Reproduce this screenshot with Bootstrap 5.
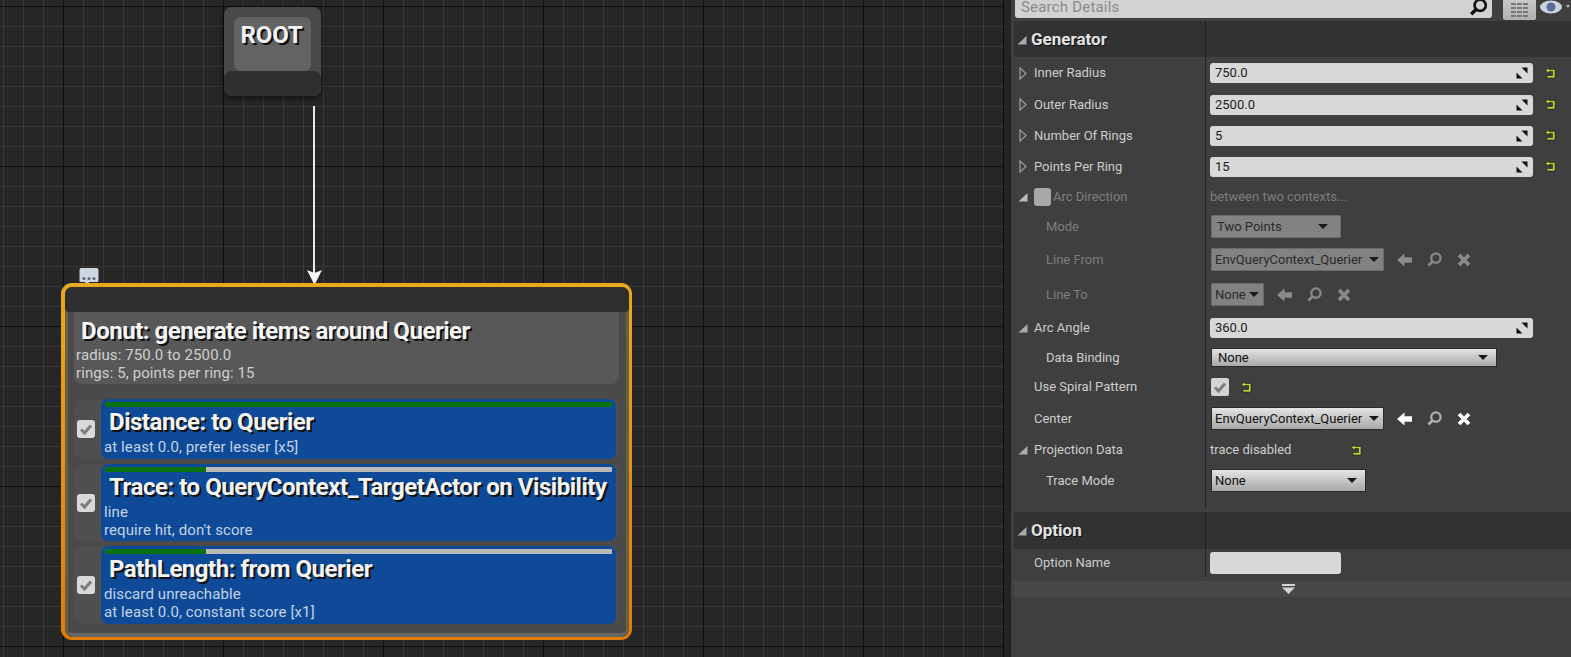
<!DOCTYPE html>
<html lang="en">
<head>
<meta charset="utf-8">
<title>Environment Query</title>
<link href="https://cdn.jsdelivr.net/npm/bootstrap@5.3.0/dist/css/bootstrap.min.css" rel="stylesheet">
<style>
html,body{width:1571px;height:657px;overflow:hidden;background:#3f3f3f;font-family:Roboto,"Liberation Sans",sans-serif;}
.stage{width:1571px;height:657px;}
.graph{width:1004px;height:657px;flex:none;background-color:#262626;
 background-size:160px 160px,160px 160px,20px 20px,20px 20px;
 background-image:linear-gradient(#0e0e0e 1px,transparent 1px),linear-gradient(90deg,#0e0e0e 1px,transparent 1px),linear-gradient(#373737 1px,transparent 1px),linear-gradient(90deg,#373737 1px,transparent 1px);
 background-position:0 6px,63px 0,0 6px,3px 0;border-right:1px solid #0c0c0c;}
.splitter{width:7px;flex:none;background:#242424;}
.root-node{left:224px;top:7px;width:97px;height:89px;background:#494949;border-radius:8px;box-shadow:0 2px 6px rgba(0,0,0,.6);overflow:hidden;}
.root-inner{margin:10px 10px 0;height:54px;background:#636363;border-radius:7px;text-align:center;padding-right:2px;}
.root-foot{height:25px;background:#2f2f2f;border-radius:8px 8px 0 0;}
.root-title{font-size:24px;font-weight:700;line-height:36px;color:#f2f2f2;text-shadow:2px 2px 0 #111;letter-spacing:-.2px;}
.wire{left:312.500px;top:106px;width:2px;height:170px;background:#e8e8e8;}
.wire-head{left:306.500px;top:270px;}
.bubble{left:79px;top:268px;}
.big-node{left:61px;top:283px;width:571px;height:357px;padding:4px 3.500px 3.500px;border-radius:11px;background:linear-gradient(#eaa91c,#e07c04);}
.big-inner{height:100%;background:#4a4a4a;border-radius:8px;box-shadow:inset 3px 0 0 #6a6048,inset -3px 0 0 #6a6048,inset 0 -4px 0 #666;}
.big-bar{height:25px;background:#2f2f2f;border-radius:7px 7px 4px 4px;}
.big-body{padding:0 10px 0 9.500px;}
.gen-block{height:72px;background:#585858;border-radius:0 0 8px 8px;padding:5px 2px 0;}
.node-title{font-size:24px;font-weight:700;line-height:28px;margin-bottom:1px;color:#f5f5f5;padding-left:5px;text-shadow:2px 2px 0 #111;letter-spacing:-.47px;white-space:nowrap;}
.node-sub{font-size:15px;line-height:18px;color:#d0d0d0;letter-spacing:.1px;}
.test-row{margin-bottom:5px;background:#4f4f4f;border-radius:8px;}
.test-first{margin-top:15px;}
.test-left{width:27px;flex:none;padding-left:3px;}
.test-blue{width:515px;flex:none;background:#0e4a97;border-radius:7px;padding:3px 4px 0 3px;}
.test-blue .node-sub{color:#c4d4e8;}
.test-blue .node-title{line-height:30px;}
.h-a{height:60px}.h-b{height:77px}.h-c{height:78px}
.score-bar{height:5px;margin-left:1px;background:#b9b9b9;border-radius:1px;overflow:hidden;}
.score-fill{height:100%;background:#0b720f;}
.tick{width:18px;height:18px;background:#d9d9d9;border-radius:3px;}
.details{width:560px;flex:none;background:#3f3f3f;}
.search-row{height:21px;padding-left:4px;}
.search-box{width:477px;height:18px;background:#d2d2d2;border-radius:0 0 3px 3px;color:#8a8a8a;font-size:15px;line-height:12px;padding:0 0 4px 6px;letter-spacing:.2px;}
.grid-btn{width:33px;height:20px;margin-left:11px;background:linear-gradient(#c8c8c8,#b0b0b0);border-radius:0 0 2px 2px;}
.section{height:36px;margin-left:3px;background:#323232;}
.section-tall{height:37px;}
.section-name{width:192px;height:100%;border-right:1px solid #1f1f1f;color:#e4e4e4;font-size:17px;font-weight:700;text-shadow:1px 1px 0 #111;padding:2px 0 0 3px;}
.section-tall .section-name{padding-top:0;}
.prop{font-size:13px;color:#cdcdcd;}
.prop-name{width:195px;height:100%;flex:none;border-right:1px solid #252525;padding-left:5px;}
.prop-value{padding-left:4px;}
.dis{color:#7e7e7e;}
.slot{width:14px;flex:none;}
.indent{padding-left:35px;}
.flush{padding-left:23px;}
.num-field{width:323px;height:20px;background:#d8d8d8;border-radius:3px;color:#1c1c1c;padding:0 5px;}
.pick{height:23px;margin-left:1px;padding:0 4px 0 3px;color:#111;border:1px solid #2a2a2a;border-radius:1px;background:linear-gradient(#e4e4e4,#a8a8a8);}
.pick-off{background:#828282;color:#2a2a2a;border-color:#6a6a6a;}
.w-two{width:130px;padding-left:5px}.w-ctx{width:173px}.w-none{width:53px}.w-bind{width:286px;height:19px;padding-left:6px}.w-trace{width:155px}
.caret{width:0;height:0;border-left:5px solid transparent;border-right:5px solid transparent;border-top:5px solid #1a1a1a;flex:none;}
.tool-group{gap:15px;margin-left:13px;}
.tool-off{color:#8a8a8a;}
.mini-tick{width:18px;height:18px;background:#d4d4d4;border-radius:2px;margin-left:1px;}
.off-tick{width:17px;height:18px;background:#a8a8a8;border-radius:3px;margin-right:2px;}
.reset-gap{margin-left:12px;}
.trace-txt{width:141px;}
.r32{height:32px}.r31{height:31px}.r30{height:30px}.r35{height:35px}.r29{height:29px}.r33{height:33px}
.tail-space{height:16px;}
.tail-space .prop-name{height:13px;}
.option-field{width:131px;height:22px;background:#d8d8d8;border-radius:3px;}
.more-bar{height:16px;margin:4px 0 0 3px;padding-right:8px;background:#484848;}
.opt-row{height:28px;}
</style>
</head>
<body>
<svg width="0" height="0" class="position-absolute">
<defs>
<symbol id="open" viewBox="0 0 10 10"><path d="M9.500 1V9.500H.5Z" fill="currentColor"/></symbol>
<symbol id="closed" viewBox="0 0 8 13"><path d="M1 1 7 6.500 1 12Z" fill="none" stroke="currentColor" stroke-width="1.300"/></symbol>
<symbol id="reset" viewBox="0 0 11 11"><path d="M0 2.500 4 0V1.500H10V10H2V7.500H7.500V3.500H4V5Z" fill="#c4cf3c" stroke="#161616" stroke-width=".6"/></symbol>
<symbol id="spin" viewBox="0 0 12 12"><path d="M11.500.5V6.500L5.500.5ZM.5 11.500V5.500L6.500 11.500Z" fill="#111"/></symbol>
<symbol id="check" viewBox="0 0 18 18"><path d="M4 9.500 7.500 13 14 5.500" fill="none" stroke="#7d7d7d" stroke-width="3"/></symbol>
<symbol id="back" viewBox="0 0 16 14"><path d="M8 0 0 7 8 14V10H16V4H8Z" fill="currentColor"/></symbol>
<symbol id="lens" viewBox="0 0 16 16"><circle cx="9.500" cy="6.500" r="5" fill="none" stroke="currentColor" stroke-width="2.400"/><path d="M6 10 1.500 14.500" stroke="currentColor" stroke-width="3"/></symbol>
<symbol id="cross" viewBox="0 0 14 14"><path d="M2 2 12 12M12 2 2 12" stroke="currentColor" stroke-width="3.800"/></symbol>
</defs>
</svg>
<div class="stage d-flex">
 <div class="graph position-relative flex-shrink-0">
  <div class="root-node position-absolute">
   <div class="root-inner"><div class="root-title">ROOT</div></div>
   <div class="root-foot"></div>
  </div>
  <div class="wire position-absolute"></div>
  <svg class="wire-head position-absolute" width="15" height="15" viewBox="0 0 15 15"><path d="M0 0 7.500 3 15 0 7.500 15Z" fill="#f5f5f5"/></svg>
  <svg class="bubble position-absolute" width="20" height="17" viewBox="0 0 20 17"><path d="M2 0H18Q19.500 0 19.500 2V13Q19.500 14 18 14H10L8 17 6 14H2Q.5 14 .5 13V2Q.5 0 2 0Z" fill="#cdd6e0"/><circle cx="5" cy="10.500" r="1.500" fill="#55657a"/><circle cx="10" cy="10.500" r="1.500" fill="#55657a"/><circle cx="15" cy="10.500" r="1.500" fill="#55657a"/></svg>
  <div class="big-node position-absolute">
   <div class="big-inner">
    <div class="big-bar"></div>
    <div class="big-body">
     <div class="gen-block">
      <div class="node-title">Donut: generate items around Querier</div>
      <div class="node-sub">radius: 750.0 to 2500.0</div>
      <div class="node-sub">rings: 5, points per ring: 15</div>
     </div>
     <div class="test-row test-first d-flex h-a">
      <div class="test-left d-flex align-items-center"><div class="tick"><svg class="d-block" width="18" height="18"><use href="#check"/></svg></div></div>
      <div class="test-blue">
       <div class="score-bar"><div class="score-fill" style="width:100%"></div></div>
       <div class="node-title">Distance: to Querier</div>
       <div class="node-sub">at least 0.0, prefer lesser [x5]</div>
      </div>
     </div>
     <div class="test-row d-flex h-b">
      <div class="test-left d-flex align-items-center"><div class="tick"><svg class="d-block" width="18" height="18"><use href="#check"/></svg></div></div>
      <div class="test-blue">
       <div class="score-bar"><div class="score-fill" style="width:20%"></div></div>
       <div class="node-title">Trace: to QueryContext_TargetActor on Visibility</div>
       <div class="node-sub">line</div>
       <div class="node-sub">require hit, don't score</div>
      </div>
     </div>
     <div class="test-row d-flex h-c">
      <div class="test-left d-flex align-items-center"><div class="tick"><svg class="d-block" width="18" height="18"><use href="#check"/></svg></div></div>
      <div class="test-blue">
       <div class="score-bar"><div class="score-fill" style="width:20%"></div></div>
       <div class="node-title">PathLength: from Querier</div>
       <div class="node-sub">discard unreachable</div>
       <div class="node-sub">at least 0.0, constant score [x1]</div>
      </div>
     </div>
    </div>
   </div>
  </div>
 </div>
 <div class="splitter"></div>
 <div class="details">
  <div class="search-row d-flex align-items-start">
   <div class="search-box d-flex align-items-center justify-content-between"><span>Search Details</span><svg class="me-1" width="19" height="18" viewBox="0 0 16 16" color="#111"><use href="#lens"/></svg></div>
   <div class="grid-btn d-flex flex-column align-items-center justify-content-center gap-1"><svg width="17" height="15" viewBox="0 0 17 15"><path d="M0 1H5M6 1H11M12 1H17M0 5H5M6 5H11M12 5H17M0 9H5M6 9H11M12 9H17M0 13H5M6 13H11M12 13H17" stroke="#777" stroke-width="2"/></svg></div>
   <svg class="ms-1" width="30" height="16" viewBox="0 0 30 16"><ellipse cx="11" cy="7" rx="11" ry="6.500" fill="#ccd2dc"/><circle cx="11" cy="7" r="4.500" fill="#5a6c9c"/><path d="M26 5H30L28 8Z" fill="#bbb"/></svg>
  </div>
  <div class="section d-flex"><div class="section-name d-flex align-items-center gap-1"><svg width="10" height="10" color="#aaa"><use href="#open"/></svg><span>Generator</span></div></div>

  <div class="prop r32 d-flex align-items-center"><div class="prop-name d-flex align-items-center"><svg class="slot" width="8" height="13" color="#999"><use href="#closed"/></svg><span class="ms-1">Inner Radius</span></div><div class="prop-value d-flex align-items-center"><div class="num-field d-flex align-items-center justify-content-between"><span>750.0</span><svg width="12" height="12"><use href="#spin"/></svg></div><svg class="reset-gap" width="11" height="11"><use href="#reset"/></svg></div></div>
  <div class="prop r31 d-flex align-items-center"><div class="prop-name d-flex align-items-center"><svg class="slot" width="8" height="13" color="#999"><use href="#closed"/></svg><span class="ms-1">Outer Radius</span></div><div class="prop-value d-flex align-items-center"><div class="num-field d-flex align-items-center justify-content-between"><span>2500.0</span><svg width="12" height="12"><use href="#spin"/></svg></div><svg class="reset-gap" width="11" height="11"><use href="#reset"/></svg></div></div>
  <div class="prop r31 d-flex align-items-center"><div class="prop-name d-flex align-items-center"><svg class="slot" width="8" height="13" color="#999"><use href="#closed"/></svg><span class="ms-1">Number Of Rings</span></div><div class="prop-value d-flex align-items-center"><div class="num-field d-flex align-items-center justify-content-between"><span>5</span><svg width="12" height="12"><use href="#spin"/></svg></div><svg class="reset-gap" width="11" height="11"><use href="#reset"/></svg></div></div>
  <div class="prop r31 d-flex align-items-center"><div class="prop-name d-flex align-items-center"><svg class="slot" width="8" height="13" color="#999"><use href="#closed"/></svg><span class="ms-1">Points Per Ring</span></div><div class="prop-value d-flex align-items-center"><div class="num-field d-flex align-items-center justify-content-between"><span>15</span><svg width="12" height="12"><use href="#spin"/></svg></div><svg class="reset-gap" width="11" height="11"><use href="#reset"/></svg></div></div>

  <div class="prop r29 d-flex align-items-center dis"><div class="prop-name d-flex align-items-center"><svg class="slot" width="10" height="10" color="#bbb"><use href="#open"/></svg><div class="off-tick ms-1"></div><span>Arc Direction</span></div><div class="prop-value">between two contexts...</div></div>
  <div class="prop r31 d-flex align-items-center dis"><div class="prop-name indent d-flex align-items-center">Mode</div><div class="prop-value"><div class="pick pick-off w-two d-flex align-items-center justify-content-between"><span>Two Points</span><span class="caret me-2"></span></div></div></div>
  <div class="prop r35 d-flex align-items-center dis"><div class="prop-name indent d-flex align-items-center">Line From</div><div class="prop-value d-flex align-items-center"><div class="pick pick-off w-ctx d-flex align-items-center justify-content-between"><span>EnvQueryContext_Querier</span><span class="caret"></span></div><div class="d-flex align-items-center tool-group tool-off"><svg width="15" height="14"><use href="#back"/></svg><svg width="15" height="15"><use href="#lens"/></svg><svg width="14" height="14"><use href="#cross"/></svg></div></div></div>
  <div class="prop r35 d-flex align-items-center dis"><div class="prop-name indent d-flex align-items-center">Line To</div><div class="prop-value d-flex align-items-center"><div class="pick pick-off w-none d-flex align-items-center justify-content-between"><span>None</span><span class="caret"></span></div><div class="d-flex align-items-center tool-group tool-off"><svg width="15" height="14"><use href="#back"/></svg><svg width="15" height="15"><use href="#lens"/></svg><svg width="14" height="14"><use href="#cross"/></svg></div></div></div>

  <div class="prop r31 d-flex align-items-center"><div class="prop-name d-flex align-items-center"><svg class="slot" width="10" height="10" color="#aaa"><use href="#open"/></svg><span class="ms-1">Arc Angle</span></div><div class="prop-value d-flex align-items-center"><div class="num-field d-flex align-items-center justify-content-between"><span>360.0</span><svg width="12" height="12"><use href="#spin"/></svg></div></div></div>
  <div class="prop r29 d-flex align-items-center"><div class="prop-name indent d-flex align-items-center">Data Binding</div><div class="prop-value"><div class="pick w-bind d-flex align-items-center justify-content-between"><span>None</span><span class="caret me-1"></span></div></div></div>
  <div class="prop r30 d-flex align-items-center"><div class="prop-name flush d-flex align-items-center">Use Spiral Pattern</div><div class="prop-value d-flex align-items-center"><div class="mini-tick"><svg class="d-block" width="18" height="18"><use href="#check"/></svg></div><svg class="reset-gap" width="11" height="11"><use href="#reset"/></svg></div></div>
  <div class="prop r33 d-flex align-items-center"><div class="prop-name flush d-flex align-items-center">Center</div><div class="prop-value d-flex align-items-center"><div class="pick w-ctx d-flex align-items-center justify-content-between"><span>EnvQueryContext_Querier</span><span class="caret"></span></div><div class="d-flex align-items-center tool-group text-white"><svg width="15" height="14"><use href="#back"/></svg><svg width="15" height="15" color="#b0b0b0"><use href="#lens"/></svg><svg width="14" height="14"><use href="#cross"/></svg></div></div></div>
  <div class="prop r30 d-flex align-items-center"><div class="prop-name d-flex align-items-center"><svg class="slot" width="10" height="10" color="#aaa"><use href="#open"/></svg><span class="ms-1">Projection Data</span></div><div class="prop-value d-flex align-items-center"><span class="trace-txt">trace disabled</span><svg width="11" height="11"><use href="#reset"/></svg></div></div>
  <div class="prop r31 d-flex align-items-center"><div class="prop-name indent d-flex align-items-center">Trace Mode</div><div class="prop-value"><div class="pick w-trace d-flex align-items-center justify-content-between"><span>None</span><span class="caret me-1"></span></div></div></div>
  <div class="tail-space d-flex"><div class="prop-name"></div></div>
  <div class="section section-tall d-flex"><div class="section-name d-flex align-items-center gap-1"><svg width="10" height="10" color="#aaa"><use href="#open"/></svg><span>Option</span></div></div>
  <div class="prop opt-row d-flex align-items-center"><div class="prop-name flush d-flex align-items-center">Option Name</div><div class="prop-value"><div class="option-field"></div></div></div>
  <div class="more-bar d-flex align-items-center justify-content-center"><svg width="13" height="10" viewBox="0 0 13 10"><path d="M0 0H13V2H0ZM0 3.500H13L6.500 10Z" fill="#d4d4d4"/></svg></div>
 </div>
</div>
</body>
</html>
